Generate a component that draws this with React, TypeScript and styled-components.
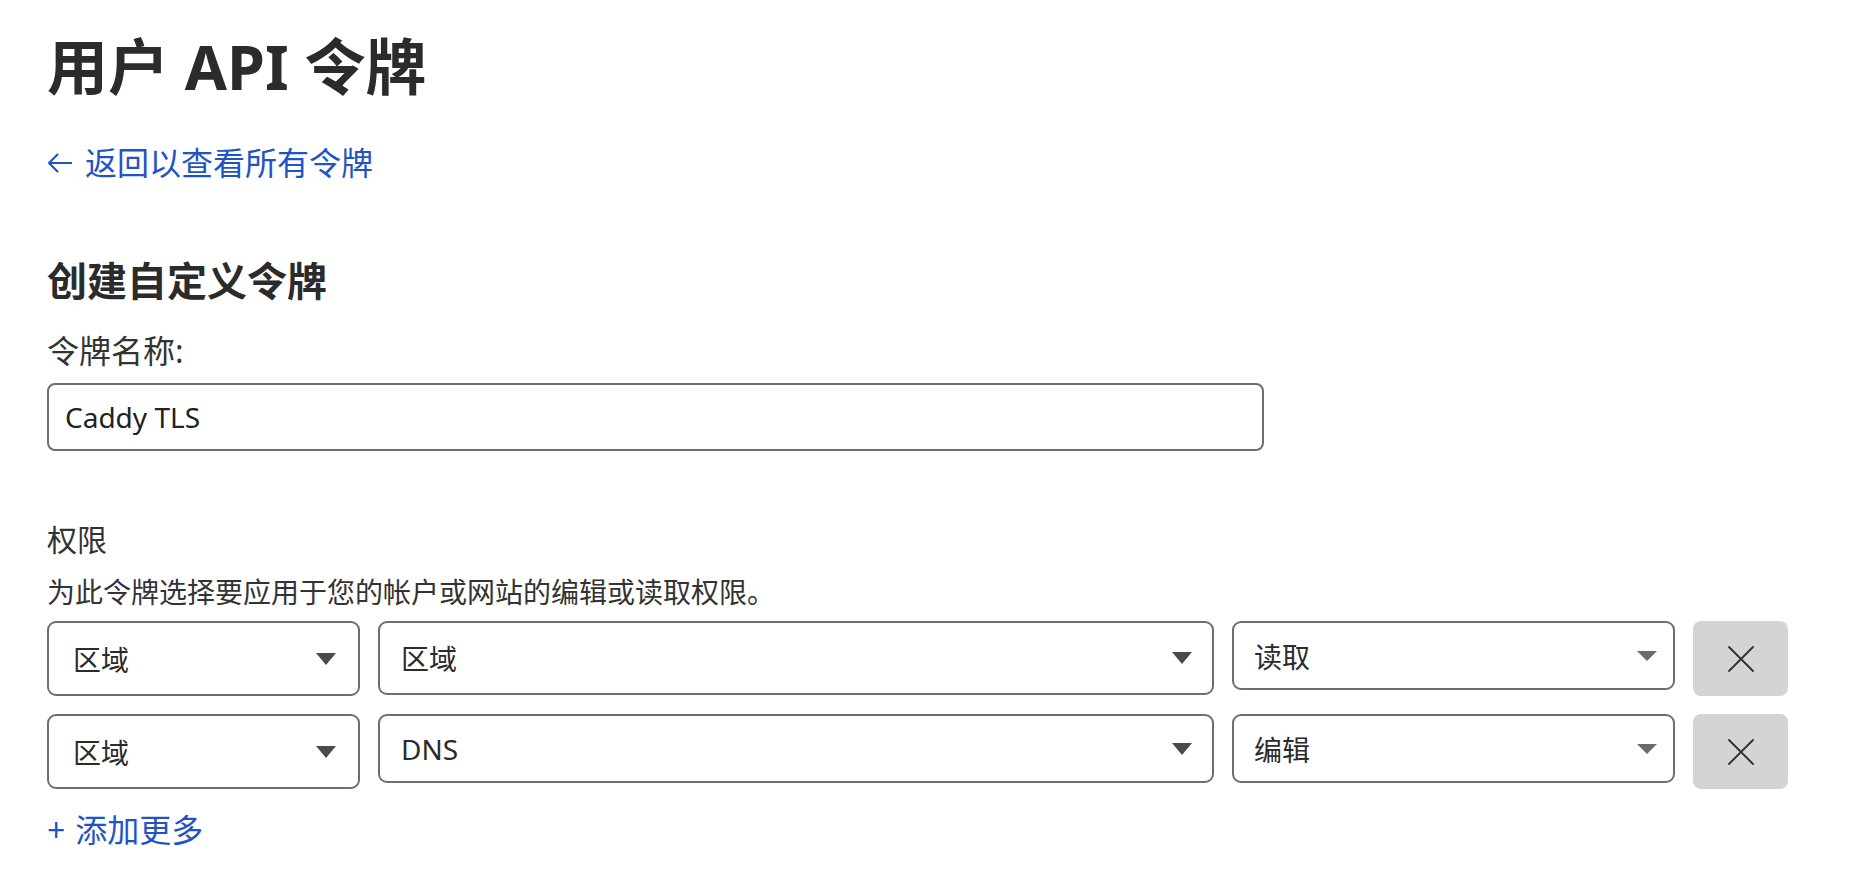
import React from 'react';
import styled, { createGlobalStyle } from 'styled-components';

const GlobalStyle = createGlobalStyle`
  html, body {
    margin: 0;
    padding: 0;
    background: #ffffff;
  }
  body {
    font-family: 'Noto Sans', 'Noto Sans CJK SC', sans-serif;
    color: #333333;
  }
`;

const Page = styled.div`
  padding: 27px 47px 40px;
`;

const Title = styled.h1`
  margin: 0;
  font-size: 61px;
  line-height: 79px;
  font-weight: 700;
  color: #2b2b2b;
`;

const TextLink = styled.a<{ $gap?: number }>`
  display: inline-flex;
  align-items: center;
  gap: ${(p) => p.$gap ?? 12}px;
  color: #1f54c4;
  font-size: 32px;
  line-height: 48px;
  text-decoration: none;
  cursor: pointer;
`;

const BackRow = styled.div`
  margin-top: 33px;
`;

const SectionTitle = styled.h2`
  margin: 66px 0 0;
  font-size: 40px;
  line-height: 56px;
  font-weight: 700;
  color: #2b2b2b;
`;

const FieldLabel = styled.label`
  display: block;
  margin-top: 19px;
  font-size: 32px;
  line-height: 46px;
  color: #333;
`;

const TextInput = styled.input`
  display: block;
  box-sizing: border-box;
  margin-top: 9px;
  width: 1217px;
  height: 68px;
  padding: 0 16px;
  border: 2px solid #6e6e6e;
  border-radius: 8px;
  font-family: 'Noto Sans', 'Noto Sans CJK SC', sans-serif;
  font-size: 28px;
  color: #222;
  outline: none;
`;

const Subheading = styled.div`
  margin-top: 67px;
  font-size: 30px;
  line-height: 44px;
  color: #333;
`;

const Hint = styled.p`
  margin: 10px 0 0;
  font-size: 28px;
  line-height: 40px;
  color: #333;
`;

const Rows = styled.div`
  margin-top: 9px;
  display: flex;
  flex-direction: column;
  gap: 18px;
`;

const Row = styled.div`
  display: flex;
  align-items: flex-start;
`;

const SelectBox = styled.div<{ $w: number; $h: number; $gap: number; $pl: number; $pr: number }>`
  box-sizing: border-box;
  width: ${(p) => p.$w}px;
  height: ${(p) => p.$h}px;
  margin-right: ${(p) => p.$gap}px;
  padding: 0 ${(p) => p.$pr}px 0 ${(p) => p.$pl}px;
  border: 2px solid #6e6e6e;
  border-radius: 9px;
  display: flex;
  align-items: center;
  justify-content: space-between;
  font-size: 28px;
  color: #2b2b2b;
  cursor: pointer;
`;

const Caret = styled.span<{ $color: string; $h: number }>`
  width: 0;
  height: 0;
  border-left: 10px solid transparent;
  border-right: 10px solid transparent;
  border-top: ${(p) => p.$h}px solid ${(p) => p.$color};
`;

const RemoveButton = styled.button`
  box-sizing: border-box;
  width: 95px;
  height: 75px;
  border: none;
  border-radius: 8px;
  background: #d4d4d4;
  display: flex;
  align-items: center;
  justify-content: center;
  cursor: pointer;
  padding: 0;
`;

const AddRow = styled.div`
  margin-top: 17px;
`;

type Sel = { text: string; w: number; h: number; gap: number; pl: number; pr: number; caret: string; ch: number };

const rows: Sel[][] = [
  [
    { text: '区域', w: 313, h: 75, gap: 18, pl: 24, pr: 22, caret: '#4a4a4a', ch: 12 },
    { text: '区域', w: 836, h: 74, gap: 18, pl: 21, pr: 20, caret: '#4a4a4a', ch: 12 },
    { text: '读取', w: 443, h: 69, gap: 18, pl: 20, pr: 16, caret: '#6b6b6b', ch: 10 },
  ],
  [
    { text: '区域', w: 313, h: 75, gap: 18, pl: 24, pr: 22, caret: '#4a4a4a', ch: 12 },
    { text: 'DNS', w: 836, h: 69, gap: 18, pl: 21, pr: 20, caret: '#4a4a4a', ch: 12 },
    { text: '编辑', w: 443, h: 69, gap: 18, pl: 20, pr: 16, caret: '#6b6b6b', ch: 10 },
  ],
];

function CloseIcon() {
  return (
    <svg width="26" height="26" viewBox="0 0 26 26" fill="none">
      <path d="M1 1L25 25M25 1L1 25" stroke="#2f2f2f" strokeWidth="1.8" strokeLinecap="round" />
    </svg>
  );
}

function ArrowLeft() {
  return (
    <svg width="26" height="22" viewBox="0 0 26 22" fill="none">
      <path d="M25 11H2M11 2L2 11L11 20" stroke="#1f54c4" strokeWidth="2.2" strokeLinejoin="round" />
    </svg>
  );
}

export default function App() {
  return (
    <Page>
      <GlobalStyle />
      <Title>用户 API 令牌</Title>
      <BackRow>
        <TextLink>
          <ArrowLeft />
          返回以查看所有令牌
        </TextLink>
      </BackRow>

      <SectionTitle>创建自定义令牌</SectionTitle>
      <FieldLabel>令牌名称:</FieldLabel>
      <TextInput defaultValue="Caddy TLS" />

      <Subheading>权限</Subheading>
      <Hint>为此令牌选择要应用于您的帐户或网站的编辑或读取权限。</Hint>

      <Rows>
        {rows.map((row, i) => (
          <Row key={i}>
            {row.map((s, j) => (
              <SelectBox key={j} $w={s.w} $h={s.h} $gap={s.gap} $pl={s.pl} $pr={s.pr}>
                <span>{s.text}</span>
                <Caret $color={s.caret} $h={s.ch} />
              </SelectBox>
            ))}
            <RemoveButton aria-label="remove">
              <CloseIcon />
            </RemoveButton>
          </Row>
        ))}
      </Rows>

      <AddRow>
        <TextLink $gap={10}>
          <span>+</span>
          添加更多
        </TextLink>
      </AddRow>
    </Page>
  );
}
